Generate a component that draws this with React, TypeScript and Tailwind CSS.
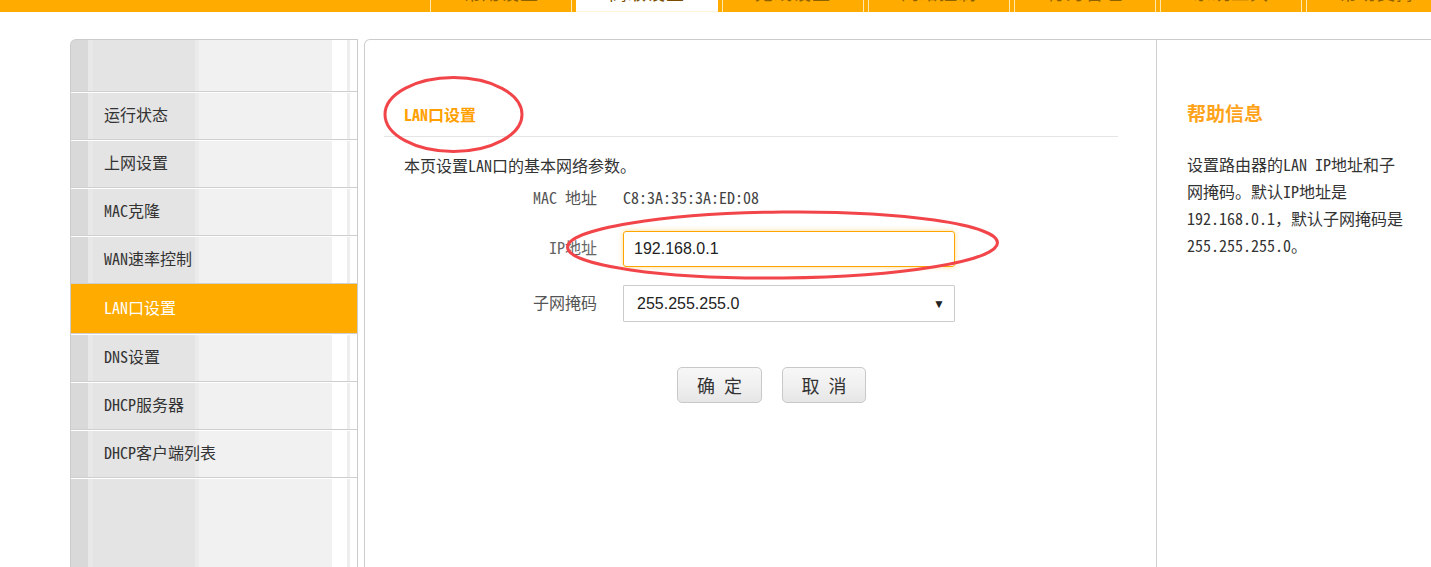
import React from "react";

const cjk = '"Noto Sans Mono CJK SC", "Noto Sans CJK SC", sans-serif';

const tabs = ["常用设置", "高级设置", "无线设置", "网络控制", "行为管理", "系统工具", "帮助支持"];

const menu = ["运行状态", "上网设置", "MAC克隆", "WAN速率控制", "LAN口设置", "DNS设置", "DHCP服务器", "DHCP客户端列表"];

export default function App() {
  return (
    <div
      className="relative w-[1431px] h-[567px] overflow-hidden bg-white text-[#333]"
      style={{ fontFamily: cjk }}
    >
      {/* top nav */}
      <div className="h-[12px] bg-[#ffab00] flex pl-[430px] gap-[4px]">
        {tabs.map((t, i) => (
          <div
            key={t}
            className={
              i === 1
                ? "w-[142px] shrink-0 h-[12px] bg-white border-b border-[#fff4d6] flex justify-center items-end overflow-hidden"
                : "w-[142px] shrink-0 h-[12px] border-x border-[#ffe8b0] flex justify-center items-end overflow-hidden"
            }
          >
            <span
              className={
                i === 1
                  ? "text-[18px] leading-[18px] mb-[10px] text-[#7a4e00] tracking-[1px]"
                  : "text-[18px] leading-[18px] mb-[11px] text-[#8f6200] tracking-[1px]"
              }
            >
              {t}
            </span>
          </div>
        ))}
      </div>

      <div className="flex mt-[27px] pl-[70px] gap-[6px]">
        {/* sidebar */}
        <div className="w-[288px] shrink-0 h-[528px] border border-b-0 border-[#cccccc] rounded-tl-[6px] overflow-hidden bg-[linear-gradient(to_right,#d9d9d9_0px,#d9d9d9_17px,#e8e8e8_17px,#e8e8e8_22px,#e4e4e4_22px,#e4e4e4_124px,#ebebeb_124px,#ebebeb_128px,#f1f1f1_128px,#f1f1f1_261px,#ffffff_261px,#ffffff_276px,#eeeeee_276px,#eeeeee_279px,#ffffff_279px)]">
          <div className="h-[51px]" />
          {menu.map((m) => {
            const active = m === "LAN口设置";
            return (
              <div
                key={m}
                className={
                  active
                    ? "h-[50px] border-t border-[#cfcfcf] bg-[#ffab00] text-white flex items-center pl-[33px] pb-[4px] text-[16px]"
                    : "h-[48px] border-t border-[#cfcfcf] shadow-[inset_0_1px_0_#ffffff] flex items-center pl-[33px] pb-[4px] text-[16px] text-[#333]"
                }
              >
                {m}
              </div>
            );
          })}
          <div className="border-t border-[#cfcfcf] shadow-[inset_0_1px_0_#ffffff] h-[100px]" />
        </div>

        {/* main panel */}
        <div className="w-[1100px] shrink-0 h-[528px] border border-b-0 border-[#cccccc] rounded-tl-[6px] flex">
          <div className="w-[792px] shrink-0 border-r border-[#d0d0d0]">
            <div className="ml-[19px] mr-[38px] h-[97px] border-b border-[#e5e5e5] flex items-end pb-[10px] pl-[20px]">
              <span className="text-[16px] leading-[24px] font-bold text-[#ffa000]">LAN口设置</span>
            </div>
            <div className="pl-[39px] mt-[16px] text-[16px] leading-[24px] text-[#333]">
              本页设置LAN口的基本网络参数。
            </div>
            <div className="pl-[39px] mt-[8px] grid grid-cols-[193px_332px] gap-x-[26px] items-center">
              <div className="text-right text-[16px] leading-[24px] text-[#555]">MAC 地址</div>
              <div className="text-[16px] leading-[24px] text-[#444]">C8:3A:35:3A:ED:08</div>

              <div className="text-right text-[16px] leading-[24px] text-[#666] mt-[22px] pb-[4px]">IP地址</div>
              <div className="mt-[22px] h-[36px] border border-[#ffa500] rounded-[3px] shadow-[0_0_5px_rgba(255,170,0,0.45)] flex items-center pl-[10px] text-[16px] text-[#222]" style={{ fontFamily: '"Liberation Sans", Arial, sans-serif' }}>
                192.168.0.1
              </div>

              <div className="text-right text-[16px] leading-[24px] text-[#555] mt-[18px] pb-[4px]">子网掩码</div>
              <div className="mt-[18px] h-[37px] border border-[#cccccc] rounded-[1px] flex items-center justify-between pl-[13px] pr-[9px] text-[16px] text-[#222]" style={{ fontFamily: '"Liberation Sans", Arial, sans-serif' }}>
                <span>255.255.255.0</span>
                <span className="text-[12px] text-[#222]">▼</span>
              </div>
            </div>
            <div className="flex gap-[20px] pl-[312px] mt-[45px]">
              <button className="w-[85px] h-[36px] border border-[#c8c8c8] rounded-[5px] bg-[linear-gradient(to_bottom,#f7f7f7,#f0f0f0_50%,#e6e6e6)] text-[18px] leading-[34px] pb-[2px] text-[#333]">
                确 定
              </button>
              <button className="w-[84px] h-[36px] border border-[#c8c8c8] rounded-[5px] bg-[linear-gradient(to_bottom,#f7f7f7,#f0f0f0_50%,#e6e6e6)] text-[18px] leading-[34px] pb-[2px] text-[#333]">
                取 消
              </button>
            </div>
          </div>

          <div className="pl-[30px] pt-[61px]">
            <div className="text-[19px] leading-[24px] font-bold text-[#ffa41a]">帮助信息</div>
            <div className="mt-[26px] text-[16px] leading-[27px] text-[#333]">
              <div>设置路由器的LAN IP地址和子</div>
              <div>网掩码。默认IP地址是</div>
              <div>192.168.0.1，默认子网掩码是</div>
              <div>255.255.255.0。</div>
            </div>
          </div>
        </div>
      </div>

      {/* red annotation ellipses */}
      <svg className="absolute top-0 left-0 pointer-events-none" width="1431" height="567">
        <ellipse cx="453.5" cy="114.5" rx="68.5" ry="37" fill="none" stroke="#f2454a" strokeWidth="3" />
        <ellipse cx="782.5" cy="245" rx="215" ry="33" fill="none" stroke="#f2454a" strokeWidth="3" transform="rotate(-0.6 782.5 245)" />
      </svg>
    </div>
  );
}
